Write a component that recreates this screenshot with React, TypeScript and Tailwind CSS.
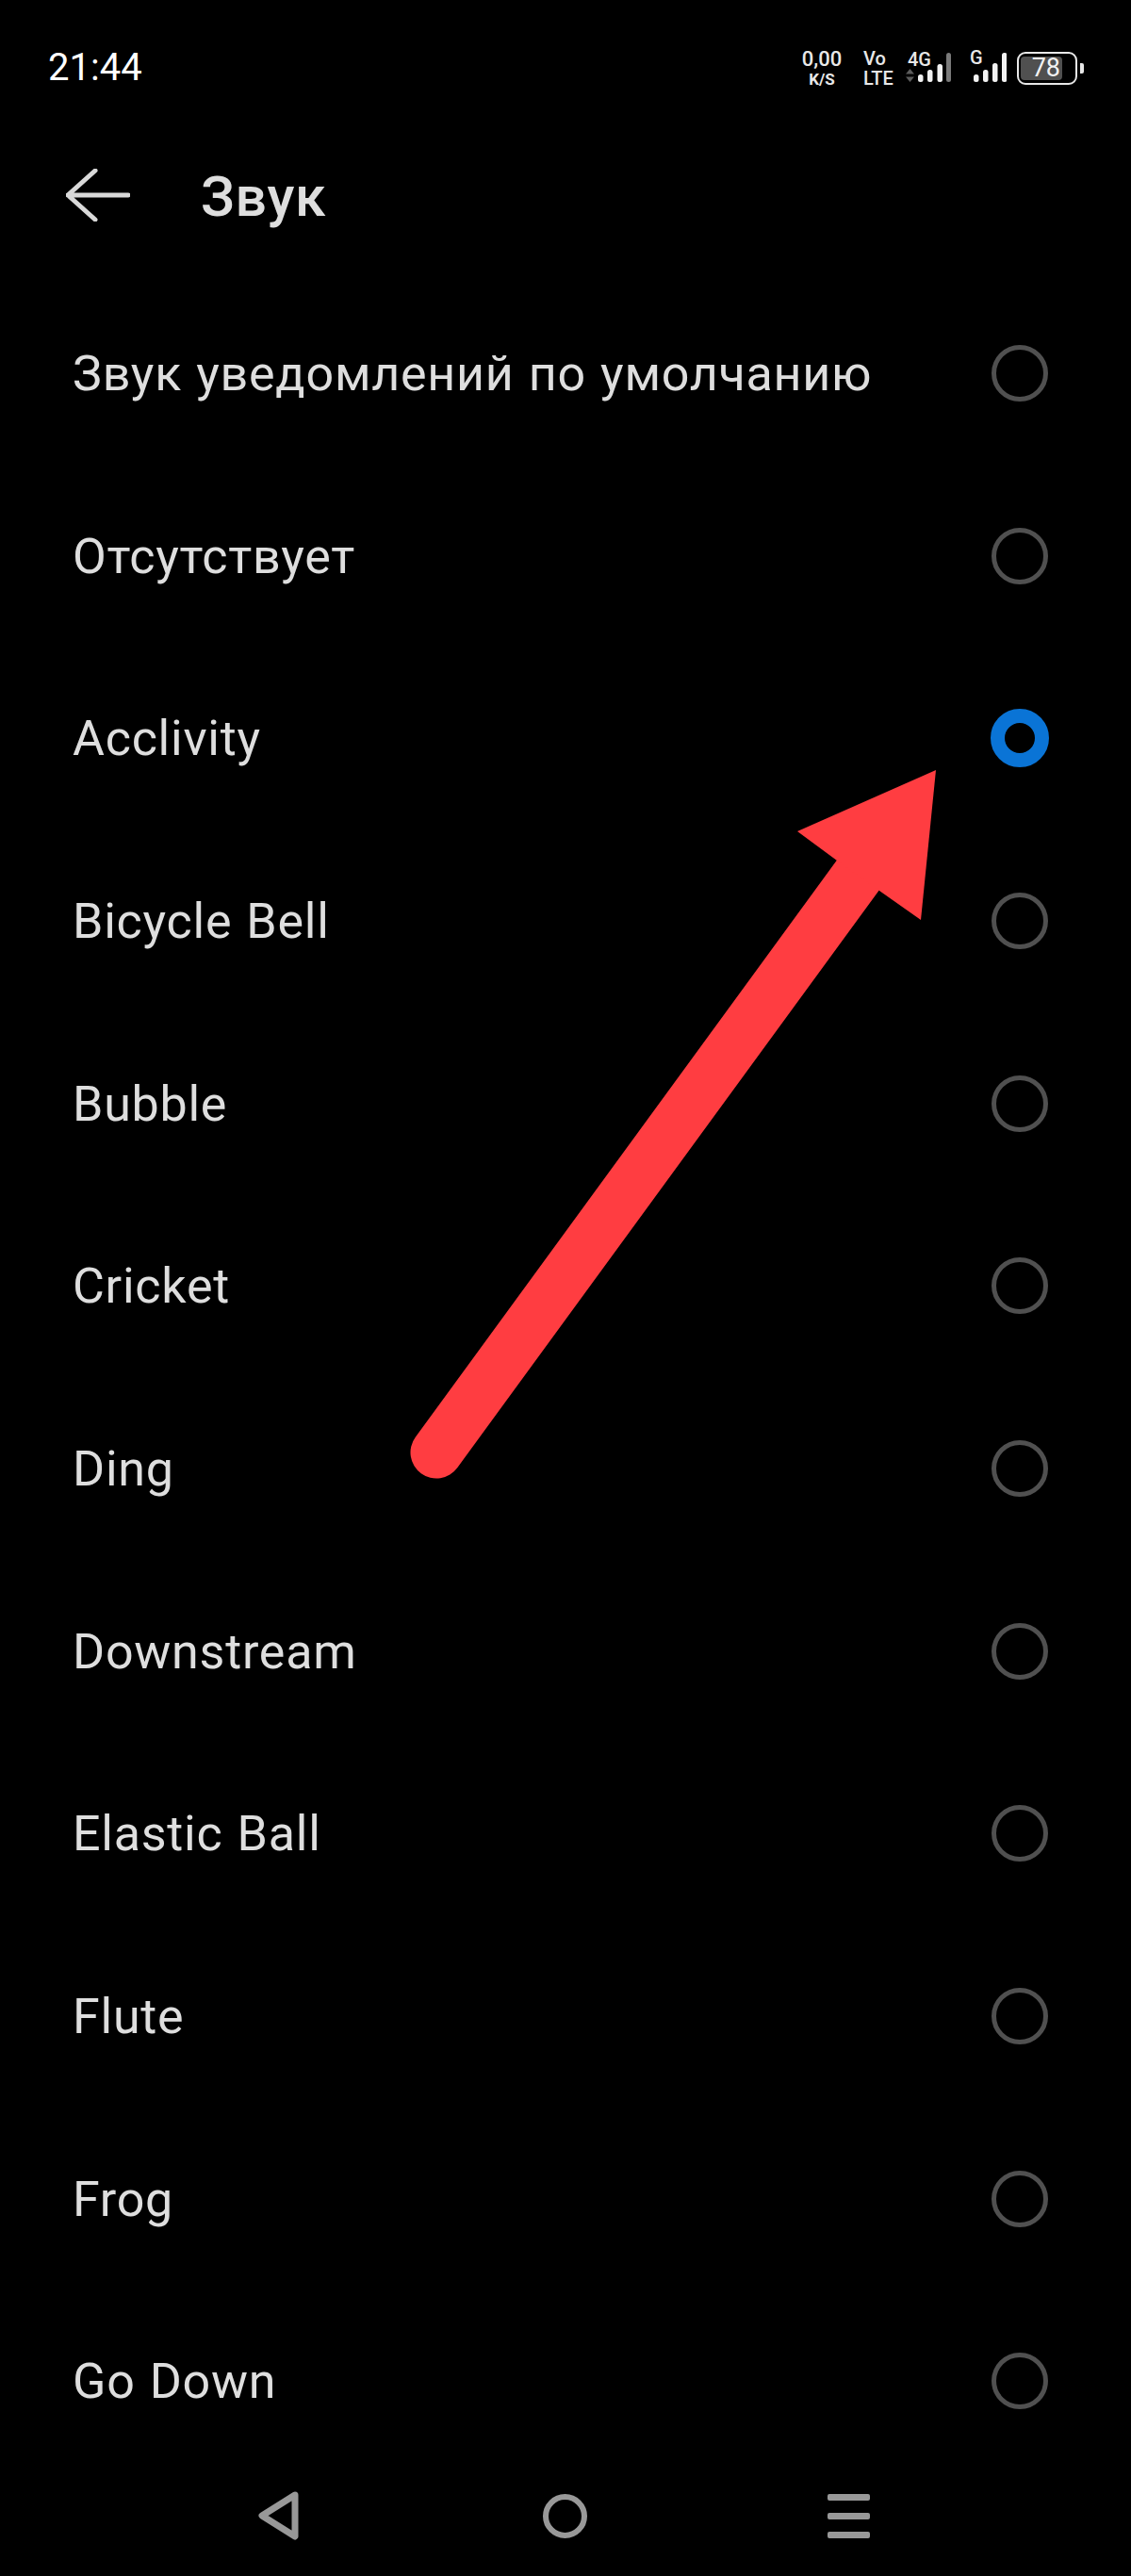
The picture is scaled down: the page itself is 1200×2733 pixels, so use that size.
const sounds = [
  "Звук уведомлений по умолчанию",
  "Отсутствует",
  "Acclivity",
  "Bicycle Bell",
  "Bubble",
  "Cricket",
  "Ding",
  "Downstream",
  "Elastic Ball",
  "Flute",
  "Frog",
  "Go Down",
];

const StatusBar = () => (
  <div className="flex h-[144px] items-center justify-between pl-[51px] pr-[50px]">
    <span className="text-[40px] leading-none text-white">21:44</span>
    <div className="flex items-center font-medium text-[#e8e8e8]">
      <div className="flex w-[42px] flex-col items-center">
        <span className="text-[22px] leading-[24px]">0,00</span>
        <span className="text-[17px] leading-[18px] font-bold">K/S</span>
      </div>
      <div className="ml-[23px] flex w-[32px] flex-col items-start">
        <span className="text-[20px] leading-[22px]">Vo</span>
        <span className="text-[20px] leading-[20px]">LTE</span>
      </div>
      <div className="relative ml-[13px] h-[36px] w-[48px]">
        <span className="absolute left-[2px] top-[-1px] text-[20px] leading-[20px]">4G</span>
        <svg width="48" height="36" viewBox="0 0 48 36" className="block">
          <path d="M0 24.5 4.5 19 9 24.5Z M0 27.5 4.5 33 9 27.5Z" fill="#5c5c5c" />
          <rect x="13" y="25" width="5.5" height="8" rx="2.5" fill="#f2f2f2" />
          <rect x="23" y="20" width="5.5" height="13" rx="2.5" fill="#f2f2f2" />
          <rect x="33.5" y="14" width="5.5" height="19" rx="2.5" fill="#f2f2f2" />
          <rect x="43" y="2" width="5" height="31" rx="2.5" fill="#7a7a7a" />
        </svg>
      </div>
      <div className="relative ml-[20px] h-[36px] w-[39px]">
        <span className="absolute left-0 top-[-3px] text-[20px] leading-[20px]">G</span>
        <svg width="39" height="36" viewBox="0 0 39 36" className="block">
          <rect x="4" y="25" width="5.5" height="8" rx="2.5" fill="#f2f2f2" />
          <rect x="14" y="20" width="5.5" height="13" rx="2.5" fill="#f2f2f2" />
          <rect x="24" y="13" width="5.5" height="20" rx="2.5" fill="#f2f2f2" />
          <rect x="34" y="2" width="5.5" height="31" rx="2.5" fill="#f2f2f2" />
        </svg>
      </div>
      <div className="ml-[11px] flex h-[35px] w-[64px] items-center rounded-[9px] border-2 border-[#e8e8e8] pl-[2px]">
        <span className="flex h-[25px] w-[44px] items-center justify-end rounded-[4px] bg-[#505050] pr-[2px] text-[27px] leading-none font-normal text-[#f2f2f2]">
          78
        </span>
      </div>
      <div className="ml-[3px] h-[11px] w-[4px] rounded-r-[2px] bg-[#e8e8e8]" />
    </div>
  </div>
);

const Header = () => (
  <div className="flex h-[126px] items-center pl-[70px]">
    <svg width="68" height="56" viewBox="0 0 68 56" fill="none" className="block">
      <path
        d="M2 28H66M31 2 2 28 31 54"
        stroke="#d9d9d9"
        strokeWidth="5"
        strokeLinecap="round"
        strokeLinejoin="round"
      />
    </svg>
    <h1 className="ml-[75px] pt-[3px] text-[59px] leading-none font-medium tracking-[0.7px] text-[#dedede]">
      Звук
    </h1>
  </div>
);

const Radio = ({ selected }: { selected: boolean }) =>
  selected ? (
    <div className="h-[62px] w-[62px] rounded-full border-[15px] border-[#0a74d6]" />
  ) : (
    <div className="mx-px h-[60px] w-[60px] rounded-full border-[5px] border-[#505050]" />
  );

const NavBar = () => (
  <div className="flex h-[92px] items-center pl-[274px]">
    <svg width="44" height="52" viewBox="0 0 44 52" fill="none" className="block">
      <path
        d="M39 4 4 26 39 48Z"
        stroke="#989898"
        strokeWidth="7"
        strokeLinejoin="round"
      />
    </svg>
    <div className="ml-[258px] h-[47px] w-[47px] rounded-full border-[6px] border-[#989898]" />
    <div className="ml-[255px] flex w-[45px] flex-col gap-[13px]">
      <div className="h-[7px] rounded-[2px] bg-[#989898]" />
      <div className="h-[7px] rounded-[2px] bg-[#989898]" />
      <div className="h-[7px] rounded-[2px] bg-[#989898]" />
    </div>
  </div>
);

export default function App() {
  return (
    <div className="relative h-[2733px] w-[1200px] overflow-hidden bg-black font-['Roboto',sans-serif]">
      <StatusBar />
      <Header />
      <ul className="mt-[29px]">
        {sounds.map((name) => (
          <li
            key={name}
            className="flex h-[193.7px] items-center justify-between pl-[77px] pr-[87px] text-[#dedede]"
          >
            <span className="pt-[2px] text-[52px] leading-none tracking-[0.75px] [word-spacing:1.5px]">
              {name}
            </span>
            <Radio selected={name === "Acclivity"} />
          </li>
        ))}
      </ul>
      <NavBar />
      {/* red annotation arrow on top of the list */}
      <svg
        width="1200"
        height="2733"
        viewBox="0 0 1200 2733"
        className="absolute left-0 top-0"
      >
        <line
          x1="463"
          y1="1541"
          x2="910"
          y2="929"
          stroke="#ff3d41"
          strokeWidth="55"
          strokeLinecap="round"
        />
        <polygon points="993,817 846,882 888,913 933,945 977,976" fill="#ff3d41" />
      </svg>
    </div>
  );
}
